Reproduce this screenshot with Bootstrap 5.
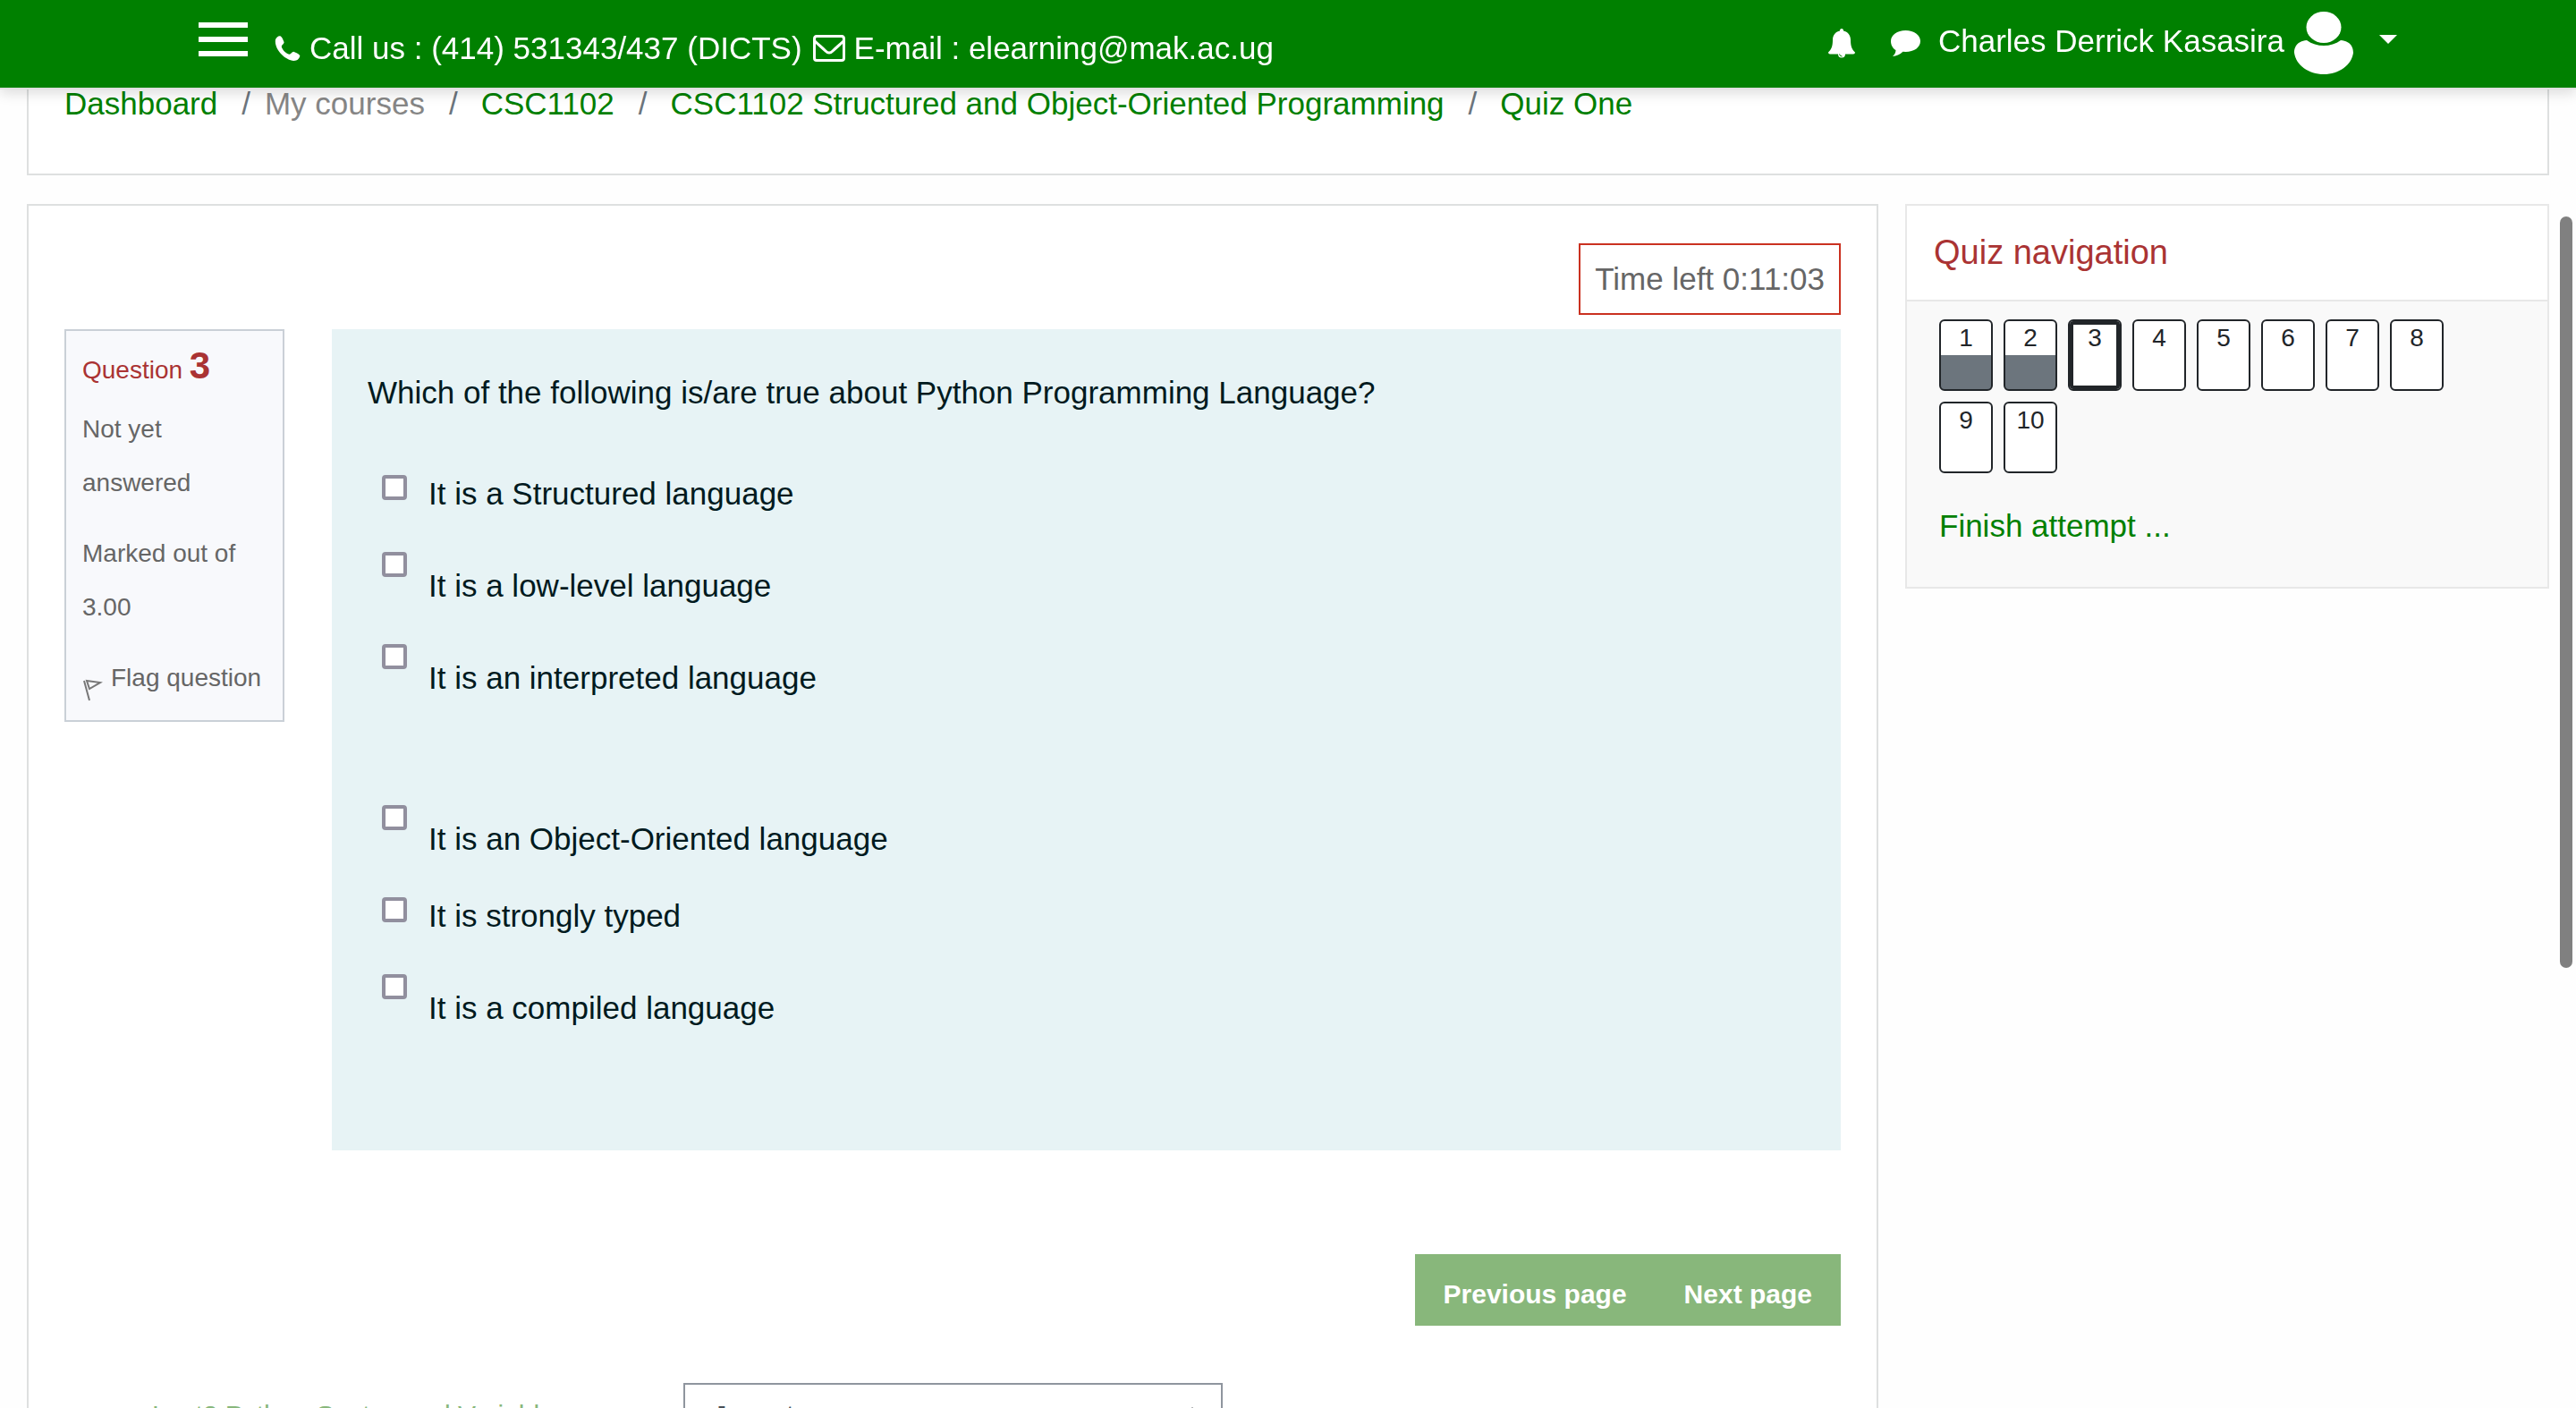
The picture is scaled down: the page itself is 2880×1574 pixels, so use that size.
<!DOCTYPE html>
<html lang="en">
<head>
<meta charset="utf-8">
<meta name="viewport" content="width=device-width, initial-scale=1">
<title>Quiz One</title>
<link rel="stylesheet" href="https://cdn.jsdelivr.net/npm/bootstrap@5.3.0/dist/css/bootstrap.min.css">
<style>
  body { font-family: "Liberation Sans", Arial, sans-serif; font-size: 35px; line-height: 60px; color: #666; background: #fefefe; }
  a { color: #008000; text-decoration: none; }
  .topbar { background: #008000; border-bottom: 2px solid #e0e0e0; box-shadow: 0 4px 14px rgba(0,0,0,.14); height: 100px; padding: 0 200px 0 222px; color: #fff; }
  .topbar svg { fill: currentColor; }
  .menu-toggle { margin-top: 25px; width: 55px; height: 38px; border: 0; padding: 0; background: none; display: flex; flex-direction: column; justify-content: space-between; }
  .menu-toggle span { height: 6px; background: #fff; }
  .contact-line { margin-left: 30px; padding-top: 24px; gap: 12px; }
  .contact-line span { display: flex; align-items: center; gap: 10px; }
  .user-line { padding-top: 12px; color: #fff; }
  .user-line a { color: #fff; margin: -4px 10px 0 20px; }
  .icon-btn { border: 0; background: none; padding: 0; color: #fff; line-height: 1; display: flex; }
  .icon-btn + .icon-btn { margin-left: 40px; }
  .drop-caret { border: 10px solid transparent; border-top-color: #fff; border-bottom: 0; margin: -8px 0 0 28px; }
  .page-body { padding: 60px 30px 0; }
  .panel-box { background: #fff; border: 2px solid #dee0e0; }
  .crumbs { padding: 24px 40px 48px; margin-bottom: 32px; }
  .crumbs .breadcrumb { margin: 0; font-size: inherit; }
  .crumbs .breadcrumb-item { color: #868686; }
  .crumbs .breadcrumb-item + .breadcrumb-item { padding-left: 27px; }
  .crumbs .breadcrumb-item + .breadcrumb-item::before { color: #6c757d; padding-right: 26px; }
  .crumbs .breadcrumb-item + .crumb-plain::before { padding-right: 16px; }
  .columns { gap: 30px; }
  .quiz-main { padding: 42px 40px 60px; }
  .timer { border: 2px solid #ca3120; padding: 8px 16px; }
  .question { gap: 53px; margin-top: 16px; }
  .q-info { flex: 0 0 246px; padding: 9px 18px 17px; background: #f8f9fc; border: 2px solid #cad0d7; font-size: 28px; }
  .q-info h3 { font-size: 28px; font-weight: 400; line-height: 60px; color: #a33; margin: 0 0 6px; }
  .q-info h3 span { font-size: 42px; font-weight: 700; }
  .q-info div { margin-bottom: 19px; }
  .q-info a { color: #666; display: flex; gap: 9px; white-space: nowrap; }
  .q-info svg { margin-top: 31px; }
  .q-panel { background: #e7f3f5; color: #001a1e; padding: 41px 40px 103px; }
  .q-panel p { margin: 0 0 53px; }
  .answer { display: flex; gap: 24px; margin: 0 0 26px 16px; }
  .answer:last-child { margin-bottom: 0; }
  .answer input { appearance: none; flex: none; width: 28px; height: 28px; margin: 9px 0 0; background: #fff; border: 4px solid #918f9e; border-radius: 4px; }
  .answer.para label { padding-top: 17px; }
  .answer.spaced { margin-bottom: 103px; }
  .q-panel { padding-bottom: 129px; }
  .page-buttons { margin: 116px 0 64px; }
  .page-buttons .btn { height: 80px; padding: 10px 32px 0; border: 0; border-radius: 0; background: #88b77b; color: #fff; font-size: 30px; font-weight: 700; line-height: 60px; }
  .prev-activity { color: #88b77b; font-size: 30px; margin-left: 60px; padding-top: 6px; }
  .jump { width: 603px; height: 80px; padding: 4px 32px 12px; font-size: 30px; line-height: 60px; color: #495057; border: 2px solid #8f959e; border-radius: 0; background-color: #fff; background-position: right 24px center; background-size: 16px 26px;
    background-image: url("data:image/svg+xml,%3csvg xmlns='http://www.w3.org/2000/svg' viewBox='0 0 16 26'%3e%3cpath fill='%23343a40' d='M8 0L0 11h16zM8 26L0 15h16z'/%3e%3c/svg%3e"); }
  .quiz-side { flex: 0 0 720px; background: #f9f9f9; border: 2px solid #e8e8e8; }
  .quiz-side h2 { background: #fff; color: #a33; font-size: 38px; line-height: 60px; font-weight: 400; margin: 0; padding: 22px 30px 23px; border-bottom: 2px solid #e8e8e8; }
  .side-body { padding: 20px 36px 38px; }
  .q-links { gap: 12px; width: 576px; margin-bottom: 29px; }
  .q-links a { width: 60px; height: 80px; border: 2px solid #212529; border-radius: 6px; background: #fff; color: #212529; font-size: 28px; line-height: 38px; text-align: center; }
  .q-links a.done { background: linear-gradient(#fff 50%, #6c757d 50%); }
  .q-links a.current { box-shadow: inset 0 0 0 4px #212529; }
  .scroll-thumb { position: fixed; right: 4px; top: 242px; width: 14px; height: 840px; border-radius: 7px; background: #808080; }
</style>
<script src="https://cdn.jsdelivr.net/npm/bootstrap@5.3.0/dist/js/bootstrap.bundle.min.js"></script>
</head>
<body class="vh-100 overflow-hidden">

<header class="topbar fixed-top d-flex align-items-start">
  <button class="menu-toggle" type="button" aria-label="Menu"><span></span><span></span><span></span></button>
  <div class="contact-line d-flex">
    <span><svg width="29" height="30" viewBox="0 0 30 30"><path d="M1 5C2 2 5 0 7 1c2 1 3 5 4 7 0 2-3 3-3 5 1 4 5 8 9 9 2 0 3-3 5-3 2 1 5 2 7 4 1 1-1 5-4 6C15 32-1 17 1 5z"/></svg>Call us : (414) 531343/437 (DICTS)</span>
    <span><svg width="36" height="30" viewBox="0 0 36 30"><path fill="none" stroke="currentColor" stroke-width="3" d="M4 1.500h28q2.500 0 2.500 3V26q0 2.500-2.500 2.500H4Q1.500 28.500 1.500 26V4.500Q1.500 1.500 4 1.500zM2 7c4 4 8 7 12 11q4 4 8 0c4-4 8-7 12-11"/></svg>E-mail : elearning@mak.ac.ug</span>
  </div>
  <div class="user-line d-flex ms-auto align-items-center">
    <button class="icon-btn" type="button" aria-label="Notifications"><svg width="30" height="33" viewBox="0 0 30 33"><path d="M15 0c1.500 0 2 1 2 2.500 5 1 8 5 8 10 0 7 1.500 11 5 14q0 2-2 2H19a4 4 0 0 1-8 0H2q-2 0-2-2c3.500-3 5-7 5-14 0-5 3-9 8-10C13 1 13.500 0 15 0z"/><path fill="none" stroke="#008000" stroke-width="1" d="M12.500 28.500q.5 2.500 3 2.500"/></svg></button>
    <button class="icon-btn" type="button" aria-label="Messages"><svg width="33" height="29" viewBox="0 0 33 29"><path d="M16.500 0C26 0 33 5 33 12s-7 12-16.500 12l-3-.2C10 27 6 29 2 29c2-2 3.500-4 3.500-7C2 20 0 16 0 12 0 5 7 0 16.500 0z"/></svg></button>
    <a href="#">Charles Derrick Kasasira</a>
    <svg width="68" height="72" viewBox="0 0 68 72"><ellipse cx="34" cy="18.500" rx="19.500" ry="17.500"/><path d="M15 33C3 34 1 42 1 47c2 14 16 24 33 24s31-10 33-24c0-5-2-13-14-14-11 8-27 8-38 0z"/></svg>
    <span class="drop-caret"></span>
  </div>
</header>

<main class="page-body">
  <nav class="panel-box crumbs" aria-label="breadcrumb">
    <ol class="breadcrumb">
      <li class="breadcrumb-item"><a href="#">Dashboard</a></li>
      <li class="breadcrumb-item crumb-plain">My courses</li>
      <li class="breadcrumb-item"><a href="#">CSC1102</a></li>
      <li class="breadcrumb-item"><a href="#">CSC1102 Structured and Object-Oriented Programming</a></li>
      <li class="breadcrumb-item"><a href="#">Quiz One</a></li>
    </ol>
  </nav>

  <div class="columns d-flex align-items-start">
    <section class="panel-box quiz-main flex-grow-1">
      <div class="d-flex justify-content-end"><div class="timer">Time left 0:11:03</div></div>
      <div class="question d-flex align-items-start">
        <aside class="q-info">
          <h3>Question <span>3</span></h3>
          <div>Not yet answered</div>
          <div>Marked out of 3.00</div>
          <a href="#"><svg width="23" height="26" viewBox="0 0 23 26" fill="none" stroke="#777" stroke-width="2"><path d="M2 2l6 22M5 2l15 2-12 7z"/></svg>Flag question</a>
        </aside>
        <form class="q-panel flex-grow-1">
          <p>Which of the following is/are true about Python Programming Language?</p>
          <div class="answer"><input type="checkbox" id="a1"><label for="a1">It is a Structured language</label></div>
          <div class="answer para"><input type="checkbox" id="a2"><label for="a2">It is a low-level language</label></div>
          <div class="answer para spaced"><input type="checkbox" id="a3"><label for="a3">It is an interpreted language</label></div>
          <div class="answer para"><input type="checkbox" id="a4"><label for="a4">It is an Object-Oriented language</label></div>
          <div class="answer"><input type="checkbox" id="a5"><label for="a5">It is strongly typed</label></div>
          <div class="answer para"><input type="checkbox" id="a6"><label for="a6">It is a compiled language</label></div>
        </form>
      </div>
      <div class="page-buttons d-flex justify-content-end">
        <button class="btn" type="button">Previous page</button>
        <button class="btn" type="button">Next page</button>
      </div>
      <div class="row">
        <div class="col-4 d-flex"><a class="prev-activity" href="#">◄ Lect2 Python Syntax and Variables</a></div>
        <div class="col-4 d-flex justify-content-center">
          <select class="form-select jump" aria-label="Jump to"><option>Jump to...</option></select>
        </div>
      </div>
    </section>

    <aside class="quiz-side">
      <h2>Quiz navigation</h2>
      <div class="side-body">
        <div class="q-links d-flex flex-wrap">
          <a class="done" href="#">1</a><a class="done" href="#">2</a><a class="current" href="#">3</a><a href="#">4</a><a href="#">5</a><a href="#">6</a><a href="#">7</a><a href="#">8</a><a href="#">9</a><a href="#">10</a>
        </div>
        <a href="#">Finish attempt ...</a>
      </div>
    </aside>
  </div>
</main>
<div class="scroll-thumb"></div>
</body>
</html>
